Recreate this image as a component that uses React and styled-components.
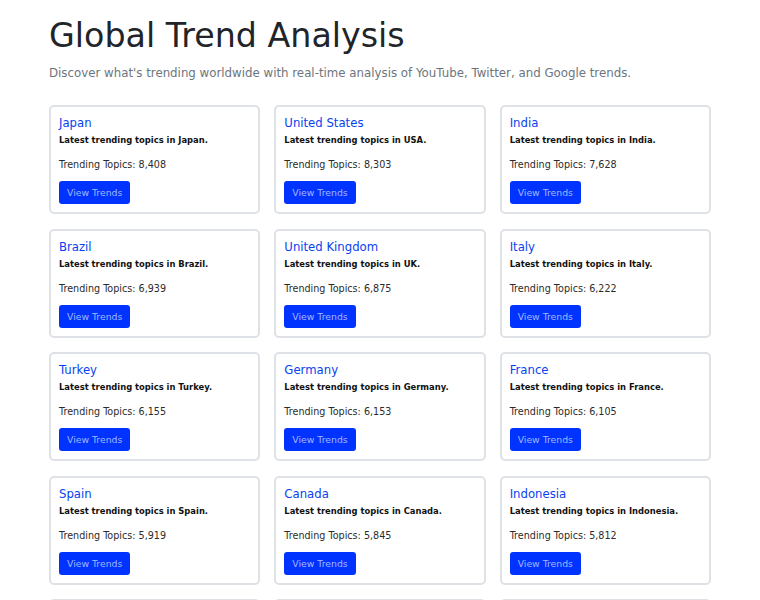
import styled, { createGlobalStyle } from "styled-components"

const GlobalStyle = createGlobalStyle`
    body {
        margin: 0;
        background: #fff;
        font-family: "DejaVu Sans", sans-serif;
        color: #212529;
    }
`;

const Page = styled.div`
    padding: 15.5px 49px 0 49px;
    width: 662px;
`;

const Title = styled.h1`
    margin: 0;
    font-size: 33.3px;
    font-weight: 400;
    color: #212529;
    line-height: 40px;
`;

const Subtitle = styled.p`
    margin: 9px 0 23px 0;
    font-size: 11.8px;
    line-height: 1.5;
    color: #6c757d;
`;

const Grid = styled.div`
    display: grid;
    grid-template-columns: repeat(3, 1fr);
    column-gap: 14px;
    row-gap: 14.5px;
`;

const Card = styled.div`
    border: 2px solid #dee2e6;
    border-radius: 5px;
    padding: 9px 8px 0 8px;
    height: 109px;
    box-sizing: border-box;
`;

const CountryName = styled.h5`
    margin: 0;
    font-size: 11.7px;
    font-weight: 500;
    line-height: 14px;
    color: #0842f0;
`;

const Description = styled.p`
    margin: 5px 0 0 0;
    font-size: 8.4px;
    font-weight: 700;
    line-height: normal;
    color: #111;
`;

const Count = styled.p`
    margin: 14px 0 0 0;
    font-size: 9.6px;
    line-height: normal;
    color: #2b2b2b;
`;

const Button = styled.button`
    display: block;
    margin-top: 11px;
    background: #0033ff;
    color: #a3b8ff;
    border: none;
    border-radius: 3px;
    padding: 6px 8px;
    font-family: inherit;
    font-size: 9.3px;
    line-height: 11px;
`;

const countries = [
    { name: "Japan", short: "Japan", count: "8,408" },
    { name: "United States", short: "USA", count: "8,303" },
    { name: "India", short: "India", count: "7,628" },
    { name: "Brazil", short: "Brazil", count: "6,939" },
    { name: "United Kingdom", short: "UK", count: "6,875" },
    { name: "Italy", short: "Italy", count: "6,222" },
    { name: "Turkey", short: "Turkey", count: "6,155" },
    { name: "Germany", short: "Germany", count: "6,153" },
    { name: "France", short: "France", count: "6,105" },
    { name: "Spain", short: "Spain", count: "5,919" },
    { name: "Canada", short: "Canada", count: "5,845" },
    { name: "Indonesia", short: "Indonesia", count: "5,812" },
    { name: "Mexico", short: "Mexico", count: "5,700" },
    { name: "Australia", short: "Australia", count: "5,650" },
    { name: "Russia", short: "Russia", count: "5,600" },
];

export default function App() {
    return (
        <>
            <GlobalStyle />
            <Page>
                <Title>Global Trend Analysis</Title>
                <Subtitle>Discover what's trending worldwide with real-time analysis of YouTube, Twitter, and Google trends.</Subtitle>
                <Grid>
                    {countries.map((c) => (
                        <Card key={c.name}>
                            <CountryName>{c.name}</CountryName>
                            <Description>Latest trending topics in {c.short}.</Description>
                            <Count>Trending Topics: {c.count}</Count>
                            <Button>View Trends</Button>
                        </Card>
                    ))}
                </Grid>
            </Page>
        </>
    )
}
